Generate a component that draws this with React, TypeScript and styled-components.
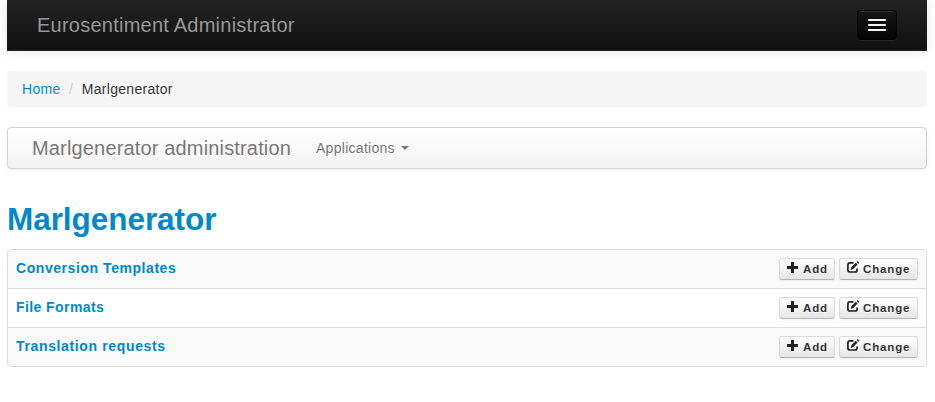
import React from 'react';
import styled, { createGlobalStyle } from 'styled-components';

const GlobalStyle = createGlobalStyle`
  *, *::before, *::after { box-sizing: border-box; }
  body {
    margin: 0;
    background: #fff;
    color: #333;
    font: 14px/20px "Liberation Sans", Arial, sans-serif;
  }
`;

const Page = styled.div`
  width: 920px;
  margin-left: 7px;
`;

const TopBar = styled.header`
  display: flex;
  align-items: center;
  justify-content: space-between;
  height: 51px;
  padding: 0 30px;
  background: linear-gradient(#222, #111);
  border-bottom: 1px solid #252525;
  box-shadow: 0 1px 10px rgba(0, 0, 0, 0.1);
`;

const Brand = styled.a`
  color: #999;
  font-size: 20px;
  letter-spacing: 0.24px;
  text-shadow: 0 -1px 0 rgba(0, 0, 0, 0.25);
`;

const MenuButton = styled.button`
  display: flex;
  flex-direction: column;
  align-items: center;
  justify-content: center;
  gap: 3px;
  width: 40px;
  height: 30px;
  padding: 0;
  background: linear-gradient(#151515, #040404);
  border: 1px solid #040404;
  border-color: #080808 #080808 #000;
  border-radius: 4px;
  box-shadow: inset 0 1px 0 rgba(255, 255, 255, 0.1), 0 1px 0 rgba(255, 255, 255, 0.075);
`;

const MenuBar = styled.span`
  width: 18px;
  height: 2px;
  background: #f5f5f5;
  border-radius: 1px;
`;

const Breadcrumb = styled.nav`
  display: flex;
  height: 36px;
  margin: 20px 0;
  padding: 8px 15px;
  background: #f5f5f5;
  border-radius: 4px;
  letter-spacing: 0.3px;
  text-shadow: 0 1px 0 #fff;
`;

const Link = styled.a`
  color: #08c;
`;

const Divider = styled.span`
  padding: 0 8.5px;
  color: #ccc;
`;

const SubBar = styled.nav`
  display: flex;
  align-items: center;
  height: 42px;
  padding: 0 24px;
  background: linear-gradient(#fff, #f2f2f2);
  border: 1px solid #d4d4d4;
  border-radius: 4px;
  box-shadow: 0 1px 4px rgba(0, 0, 0, 0.065);
  color: #777;
  text-shadow: 0 1px 0 #fff;
`;

const SubTitle = styled.span`
  width: 284px;
  font-size: 20px;
  letter-spacing: 0.16px;
`;

const Menu = styled.span`
  display: flex;
  align-items: center;
  gap: 6px;
  letter-spacing: 0.28px;
`;

const Caret = styled.span`
  border: 4px solid transparent;
  border-top-color: #777;
  border-bottom: 0;
`;

const Title = styled.h2`
  margin: 30px 0 10px;
  color: #08c;
  font-size: 31.5px;
  line-height: 40px;
  letter-spacing: -0.05px;
`;

const List = styled.section`
  border: 1px solid #ddd;
  border-radius: 4px;
  overflow: hidden;
`;

const Row = styled.div`
  display: flex;
  justify-content: space-between;
  height: 39px;
  padding: 8px;
  border-bottom: 1px solid #ddd;
  &:nth-child(odd) { background: #f9f9f9; }
  &:last-child { height: 38px; border-bottom: 0; }
`;

const RowName = styled(Link)<{ $tracking: number }>`
  font-weight: bold;
  letter-spacing: ${p => p.$tracking}px;
`;

const Actions = styled.div`
  display: flex;
  gap: 4px;
`;

const Button = styled.button<{ $width: number }>`
  display: flex;
  align-items: flex-start;
  gap: 3px;
  width: ${p => p.$width}px;
  height: 22px;
  padding: 1px 0 0 6px;
  background: linear-gradient(#fff, #e6e6e6);
  border: 1px solid #ccc;
  border-color: #dadada #dadada #b3b3b3;
  border-radius: 3px;
  box-shadow: inset 0 1px 0 rgba(255, 255, 255, 0.2), 0 1px 2px rgba(0, 0, 0, 0.05);
  color: #333;
  font: bold 11.5px/18px "Liberation Sans", Arial, sans-serif;
  letter-spacing: 0.85px;
  text-shadow: 0 1px 1px rgba(255, 255, 255, 0.75);
  white-space: nowrap;
`;

const Glyph = styled.svg`
  flex: none;
  width: 14px;
  height: 14px;
`;

const PlusIcon = () => (
  <Glyph viewBox="0 0 14 14">
    <path d="M5 2h3v4h4v3H8v4H5V9H1V6h4z" fill="#222" />
  </Glyph>
);

const EditIcon = () => (
  <Glyph viewBox="0 0 14 14">
    <path d="M7.5 2.8H4Q1.9 2.8 1.9 5v5q0 2 2.1 2h5q2.1 0 2.1-2V8.5" fill="none" stroke="#222" strokeWidth="1.7" />
    <path d="M4.8 9.9l.5-2.7L9.8 2.7l1.8 1.8L7.2 9zM10.6 1.9l1-1 1.8 1.8-1 1z" fill="#222" />
  </Glyph>
);

const models = [
  { name: 'Conversion Templates', tracking: 0.56 },
  { name: 'File Formats', tracking: 0.42 },
  { name: 'Translation requests', tracking: 0.64 },
];

export default function App() {
  return (
    <>
      <GlobalStyle />
      <Page>
        <TopBar>
          <Brand>Eurosentiment Administrator</Brand>
          <MenuButton aria-label="Menu"><MenuBar /><MenuBar /><MenuBar /></MenuButton>
        </TopBar>
        <Breadcrumb>
          <Link>Home</Link>
          <Divider>/</Divider>
          <span>Marlgenerator</span>
        </Breadcrumb>
        <SubBar>
          <SubTitle>Marlgenerator administration</SubTitle>
          <Menu>Applications<Caret /></Menu>
        </SubBar>
        <Title>Marlgenerator</Title>
        <List>
          {models.map(({ name, tracking }) => (
            <Row key={name}>
              <RowName $tracking={tracking}>{name}</RowName>
              <Actions>
                <Button $width={56}><PlusIcon />Add</Button>
                <Button $width={79}><EditIcon />Change</Button>
              </Actions>
            </Row>
          ))}
        </List>
      </Page>
    </>
  );
}
